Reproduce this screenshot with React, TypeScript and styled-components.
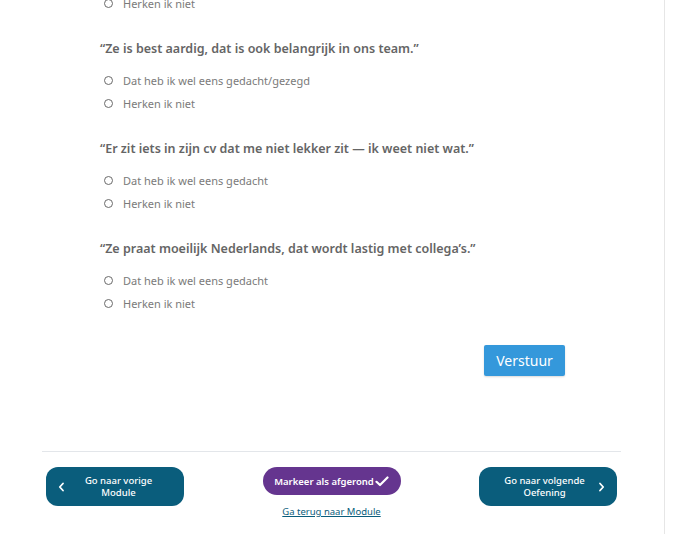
import React from "react";
import styled, { createGlobalStyle } from "styled-components";

const Global = createGlobalStyle`
  html, body { margin: 0; padding: 0; background: #fff; }
  body { font-family: "Noto Sans", "DejaVu Sans", sans-serif; overflow: hidden; }
  * { box-sizing: border-box; }
`;

const Frame = styled.div`
  width: 665px;
  height: 534px;
  border-right: 1px solid #e6e6e6;
  overflow: hidden;
`;

const Content = styled.div`
  width: 579px;
  margin-left: 42px;
`;

const Questions = styled.div`
  padding-left: 58px;
  margin-top: -8px;
`;

const Question = styled.div`
  margin-top: 24px;
`;

const Title = styled.div`
  font-size: 12.5px;
  line-height: 20px;
  font-weight: 600;
  color: #656565;
  margin-bottom: 10px;
`;

const Option = styled.label`
  display: flex;
  align-items: center;
  height: 23px;
  font-size: 11px;
  color: #7a7a7a;
`;

const Radio = styled.span`
  width: 9px;
  height: 9px;
  border: 1px solid #6a6a6a;
  border-radius: 50%;
  margin-left: 4px;
  margin-right: 10px;
  flex: none;
`;

const SubmitRow = styled.div`
  display: flex;
  justify-content: flex-end;
  padding-right: 56px;
  margin-top: 30px;
`;

const Submit = styled.button`
  width: 81px;
  height: 31px;
  border: none;
  border-radius: 2px;
  background: #3498db;
  color: #fff;
  font-family: inherit;
  font-size: 14px;
  box-shadow: 0 1px 2px rgba(0,0,0,0.15);
`;

const Divider = styled.hr`
  border: none;
  border-top: 1px solid #e3e6ea;
  margin: 75px 0 0;
`;

const Footer = styled.div`
  display: flex;
  justify-content: space-between;
  align-items: flex-start;
  padding: 15px 4px 0;
`;

const NavButton = styled.button<{ $dir: "prev" | "next" }>`
  width: 138px;
  height: 39px;
  border: none;
  border-radius: 12px;
  background: #0a5d7c;
  color: #fff;
  display: flex;
  align-items: center;
  flex-direction: ${(p) => (p.$dir === "prev" ? "row" : "row-reverse")};
  padding: 0 12px;
  font-family: inherit;
`;

const NavText = styled.span`
  flex: 1;
  text-align: center;
  font-size: 9.5px;
  line-height: 11.5px;
  font-weight: 500;
`;

const Center = styled.div`
  display: flex;
  flex-direction: column;
  align-items: center;
`;

const MarkButton = styled.button`
  width: 138px;
  height: 28px;
  border: none;
  border-radius: 14px;
  background: #65358f;
  color: #fff;
  font-family: inherit;
  font-size: 9.5px;
  font-weight: 600;
  display: flex;
  align-items: center;
  justify-content: center;
  gap: 1px;
`;

const BackLink = styled.a`
  margin-top: 10px;
  font-size: 9.5px;
  color: #0a5d7c;
  text-decoration: underline;
`;

const Chevron = ({ dir }: { dir: "left" | "right" }) => (
  <svg width="7" height="10" viewBox="0 0 7 10">
    <path
      d={dir === "left" ? "M5 1.5 L1.8 5 L5 8.5" : "M2 1.5 L5.2 5 L2 8.5"}
      fill="none"
      stroke="#fff"
      strokeWidth="1.8"
      strokeLinecap="round"
      strokeLinejoin="round"
    />
  </svg>
);

const Check = () => (
  <svg width="14" height="11" viewBox="0 0 14 11">
    <path d="M1.5 5.8 L5 9 L12.5 1.5" fill="none" stroke="#fff" strokeWidth="2.2" strokeLinecap="round" strokeLinejoin="round" />
  </svg>
);

const questions = [
  { title: "“Ze is best aardig, dat is ook belangrijk in ons team.”", first: "Dat heb ik wel eens gedacht/gezegd" },
  { title: "“Er zit iets in zijn cv dat me niet lekker zit — ik weet niet wat.”", first: "Dat heb ik wel eens gedacht" },
  { title: "“Ze praat moeilijk Nederlands, dat wordt lastig met collega’s.”", first: "Dat heb ik wel eens gedacht" },
];

export default function App() {
  return (
    <>
      <Global />
      <Frame>
        <Content>
          <Questions>
            <Option><Radio />Herken ik niet</Option>
            {questions.map((q) => (
              <Question key={q.title}>
                <Title>{q.title}</Title>
                <Option><Radio />{q.first}</Option>
                <Option><Radio />Herken ik niet</Option>
              </Question>
            ))}
          </Questions>
          <SubmitRow>
            <Submit>Verstuur</Submit>
          </SubmitRow>
          <Divider />
          <Footer>
            <NavButton $dir="prev">
              <Chevron dir="left" />
              <NavText>Go naar vorige<br />Module</NavText>
            </NavButton>
            <Center>
              <MarkButton>Markeer als afgerond<Check /></MarkButton>
              <BackLink>Ga terug naar Module</BackLink>
            </Center>
            <NavButton $dir="next">
              <Chevron dir="right" />
              <NavText>Go naar volgende<br />Oefening</NavText>
            </NavButton>
          </Footer>
        </Content>
      </Frame>
    </>
  );
}
